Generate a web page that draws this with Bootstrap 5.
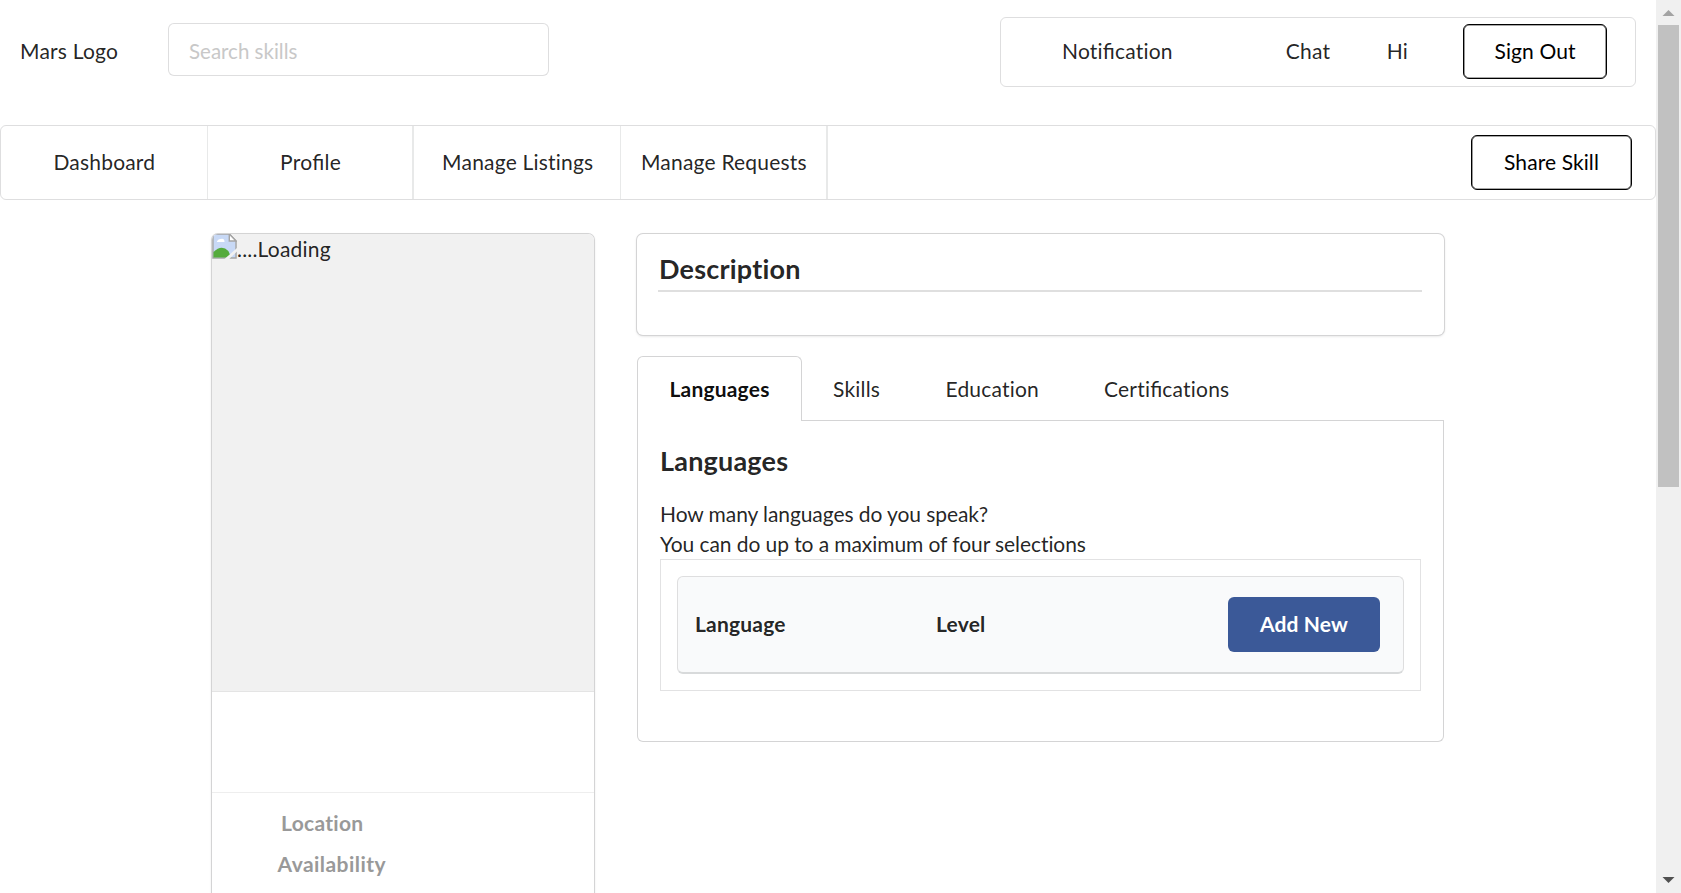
<!DOCTYPE html>
<html lang="en">
<head>
<meta charset="utf-8">
<meta name="viewport" content="width=device-width, initial-scale=1">
<title>Profile</title>
<link href="https://cdn.jsdelivr.net/npm/bootstrap@5.3.0/dist/css/bootstrap.min.css" rel="stylesheet">
<style>
:root { --line: rgba(34,36,38,.15); --ink: rgba(0,0,0,.87); }
body { font-family: Lato, "Liberation Sans", sans-serif; font-size: 21px; line-height: 30px; color: var(--ink); background: #fff; height: 893px; overflow: hidden; letter-spacing: .2px; font-variant-ligatures: none; }
.fi-pair { font-variant-ligatures: normal; font-feature-settings: "liga" 1; }
.page-main { width: 1656px; height: 893px; overflow: hidden; }
.top-row { height: 125px; padding: 0 20px; }
.brand-name { margin-top: 36px; width: 148px; }
.search-box { margin-top: 23px; width: 381px; height: 53px; border: 1px solid var(--line); border-radius: 6px; padding: 2px 20px 0; font-size: 20.5px; letter-spacing: 0; color: var(--ink); }
.search-box::placeholder { color: #c8c8c8; opacity: 1; }
.account-box { margin-top: 17px; width: 636px; height: 70px; border: 1px solid var(--line); border-radius: 6px; padding: 0 28px 2px 61px; }
.a-note { width: 224px; } .a-chat { width: 101px; } .a-hi { width: 76.500px; }
.btn { font-size: 21px; line-height: 21px; height: 55px; border-radius: 6px; padding: 0 0 2px; letter-spacing: .1px; }
.btn-line { border: 1px solid #000; box-shadow: inset 0 0 0 .6px #555; color: #000; background: #fff; }
.sign-out { width: 144px; } .share-skill { width: 161px; }
.main-menu { height: 75px; border: 1px solid var(--line); border-radius: 6px; padding-right: 23px; }
.main-menu .menu-cell { width: 206.7px; border-right: 1px solid rgba(34,36,38,.1); height: 73px; padding: 0 0 2px 1px; }
.main-menu .thick { border-right-width: 2px; }
.content { margin: 33px 0 0 212px; gap: 41px; }
.panel { border-radius: 6px; background: #fff; box-shadow: 0 1px 3px #d4d4d5, 0 0 0 1px #d4d4d5; }
.profile-card { width: 382px; height: 760px; margin-top: 1px; overflow: hidden; }
.photo { height: 457px; background: #f1f1f1; }
.photo svg { display: block; margin-top: -1px; }
.name-area { height: 102px; border-top: 1px solid #e4e4e4; border-bottom: 1px solid #eee; }
.fact { color: #999; font-weight: 700; line-height: 41px; letter-spacing: .3px; }
.loc { padding-left: 69px; margin-top: 9px; }
.avail { padding-left: 65.500px; letter-spacing: .45px; }
.desc-card { width: 807px; height: 101px; margin: 1px 0 0 2px; padding: 18px 22px 0 21px; }
.heading { font-size: 27px; line-height: 34px; font-weight: 700; margin: 0; color: var(--ink); }
.desc-card .heading { height: 40px; border-bottom: 2px solid #dfdfdf; padding-left: 1px; }
.tabs { margin: 21px 0 0 2px; width: 807px; height: 65px; }
.tab-on { width: 165px; height: 65px; border: 1px solid #d4d4d5; border-bottom: 0; border-radius: 6px 6px 0 0; font-weight: 700; color: rgba(0,0,0,.95); }
.tab-rest { border-bottom: 1px solid #d4d4d5; height: 65px; padding: 2px 0 0 31px; }
.t-skills { width: 112.500px; } .t-edu { width: 158.500px; }
.segment { margin-left: 2px; width: 807px; height: 321px; border: 1px solid #d4d4d5; border-top: 0; border-radius: 0 0 6px 6px; padding: 23px 22px 0; }
.intro { margin-top: 21px; letter-spacing: -.08px; }
.frame-box { width: 761px; height: 132px; border: 1px solid #e2e2e3; padding: 16px; }
.lang-table { height: 98px; border: 1px solid #dededf; border-bottom: 2px solid #d8dadb; border-radius: 6px; background: #f9fafb; padding: 0 23px 0 17px; font-weight: 700; }
.lang-table span { padding-bottom: 2px; }
.l-name { width: 241px; }
.btn-add { width: 152px; background: #3b5998; color: #fff; font-weight: 700; border: 0; }
.btn-add:hover { background: #344e86; color: #fff; }
.scroller { width: 25px; height: 893px; background: #f0f0f0; }
.thumb { height: 462px; width: 21px; background: #c1c1c1; }
</style>
</head>
<body>
<div class="d-flex">
  <div class="page-main flex-shrink-0">
    <header class="top-row d-flex align-items-start">
      <div class="brand-name">Mars Logo</div>
      <input class="search-box" type="text" placeholder="Search skills" aria-label="Search skills">
      <div class="account-box d-flex align-items-center ms-auto">
        <span class="a-note">Noti<span class="fi-pair">fi</span>cation</span><span class="a-chat">Chat</span><span class="a-hi">Hi</span>
        <button class="btn btn-line sign-out">Sign Out</button>
      </div>
    </header>
    <nav class="main-menu d-flex align-items-center">
      <div class="menu-cell d-flex align-items-center justify-content-center">Dashboard</div>
      <div class="menu-cell thick d-flex align-items-center justify-content-center"><span>Pro<span class="fi-pair">fi</span>le</span></div>
      <div class="menu-cell d-flex align-items-center justify-content-center">Manage Listings</div>
      <div class="menu-cell thick d-flex align-items-center justify-content-center">Manage Requests</div>
      <button class="btn btn-line share-skill ms-auto">Share Skill</button>
    </nav>
    <main class="content d-flex align-items-start">
      <aside class="panel profile-card">
        <div class="photo d-flex align-items-start">
          <svg width="25" height="26" viewBox="0 0 26 26" preserveAspectRatio="none">
            <path d="M1 1H18L25 8V25H1Z" fill="#c8d9f6" stroke="#a5a5a5" stroke-width="1.5"/>
            <path d="M5 9Q6 6 9 6Q13 5 13 9Z" fill="#fff"/>
            <path d="M1.500 24.500V19Q10 11 17 18L20 24.500Z" fill="#55ab3c"/>
            <path d="M18 1V8H25Z" fill="#fff" stroke="#a5a5a5" stroke-width="1.5"/>
            <path d="M13 26L26 15V18.500L18 26Z" fill="#f1f1f1"/>
          </svg>
          <span>....Loading</span>
        </div>
        <div class="name-area"></div>
        <div class="fact loc">Location</div>
        <div class="fact avail">Availability</div>
      </aside>
      <div>
        <section class="panel desc-card"><h3 class="heading">Description</h3></section>
        <div class="tabs d-flex">
          <div class="tab-on d-flex align-items-center justify-content-center">Languages</div>
          <div class="tab-rest d-flex align-items-center flex-grow-1">
            <span class="t-skills">Skills</span><span class="t-edu">Education</span><span>Certi<span class="fi-pair">fi</span>cations</span>
          </div>
        </div>
        <section class="segment">
          <h3 class="heading">Languages</h3>
          <div class="intro">How many languages do you speak?<br>You can do up to a maximum of four selections</div>
          <div class="frame-box">
            <div class="lang-table d-flex align-items-center">
              <span class="l-name">Language</span><span>Level</span>
              <button class="btn btn-add ms-auto">Add New</button>
            </div>
          </div>
        </section>
      </div>
    </main>
  </div>
  <div class="scroller d-flex flex-column align-items-center flex-shrink-0">
    <svg width="25" height="25"><path d="M6.500 16L12.500 10L18.500 16Z" fill="#a3a3a3"/></svg>
    <div class="thumb"></div>
    <svg class="mt-auto" width="25" height="25"><path d="M6.500 9L12.500 15L18.500 9Z" fill="#505050"/></svg>
  </div>
</div>
<script src="https://cdn.jsdelivr.net/npm/bootstrap@5.3.0/dist/js/bootstrap.bundle.min.js"></script>
</body>
</html>
